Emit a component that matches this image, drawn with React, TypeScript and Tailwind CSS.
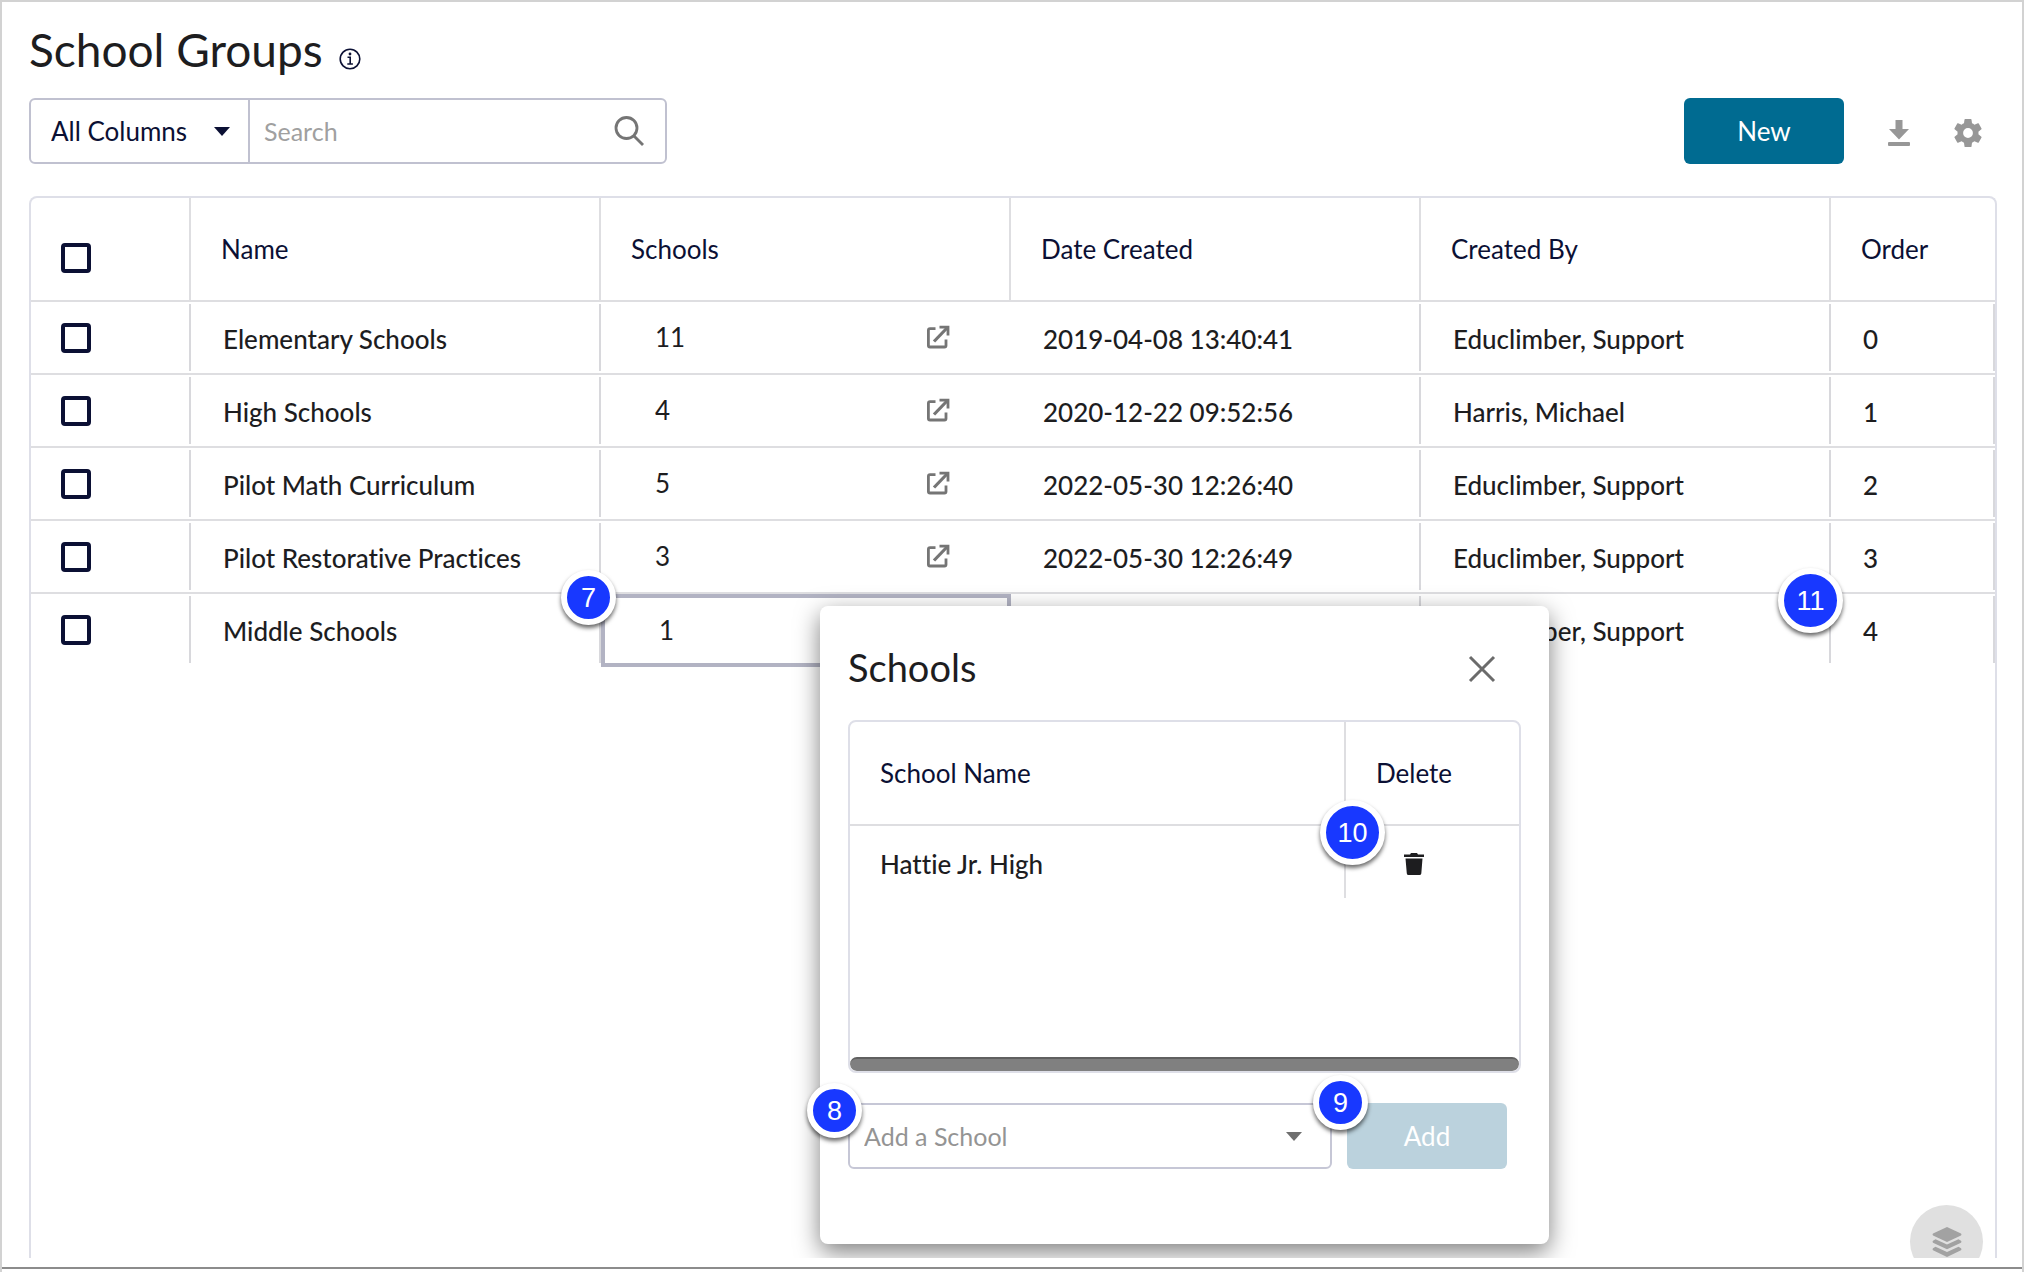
import clsx from "clsx";
import { ReactNode } from "react";

type SchoolGroup = {
  name: string;
  schools: number;
  date_created: string;
  created_by: string;
  order: number;
};

const groups: SchoolGroup[] = [
  { name: "Elementary Schools", schools: 11, date_created: "2019-04-08 13:40:41", created_by: "Educlimber, Support", order: 0 },
  { name: "High Schools", schools: 4, date_created: "2020-12-22 09:52:56", created_by: "Harris, Michael", order: 1 },
  { name: "Pilot Math Curriculum", schools: 5, date_created: "2022-05-30 12:26:40", created_by: "Educlimber, Support", order: 2 },
  { name: "Pilot Restorative Practices", schools: 3, date_created: "2022-05-30 12:26:49", created_by: "Educlimber, Support", order: 3 },
  { name: "Middle Schools", schools: 1, date_created: "2022-05-30 12:27:03", created_by: "Educlimber, Support", order: 4 },
];

const Caret = ({ className }: { className?: string }) => (
  <svg viewBox="0 0 16 9" className={clsx("pointer-events-none absolute h-[9px] w-4", className)} fill="currentColor">
    <path d="M0 0h16L8 9z" />
  </svg>
);

const OpenIcon = () => (
  <svg viewBox="0 0 24 24" className="size-6" fill="none" stroke="currentColor" strokeWidth="2.8">
    <path d="M9.500 3.600H4Q2.400 3.600 2.400 5.200V20.500Q2.400 22 4 22H18.500Q20 22 20 20.500V14.500" />
    <path d="M8 16.500L21 3" strokeWidth="3.2" />
    <path d="M13.500 2.200H22V10.500" />
  </svg>
);

const Tick = ({ label }: { label: string }) => (
  <input
    type="checkbox"
    aria-label={label}
    className="block size-[30px] appearance-none rounded-sm border-4 border-[#0b1034] bg-white"
  />
);

const HeadCell = ({ children, last }: { children: ReactNode; last?: boolean }) => (
  <th
    className={clsx(
      "h-[104px] border-b-2 border-[#dedee1] px-[30px] pb-px text-left font-normal text-[#0b1034]",
      !last && "border-r-2"
    )}
  >
    {children}
  </th>
);

const Cell = ({ children, last_row }: { children: ReactNode; last_row: boolean }) => (
  <td className={clsx("h-[73px] border-b-2 p-0", last_row ? "border-transparent" : "border-[#dedee1]")}>
    <div className="flex h-[67px] items-center border-r-2 border-[#d8d8dc] px-8 pt-[3px]">{children}</div>
  </td>
);

const Badge = ({ children, className, large }: { children: ReactNode; className: string; large?: boolean }) => (
  <span
    className={clsx(
      "absolute z-20 flex items-center justify-center rounded-full border-[6px] border-white bg-[#1838ff] pt-px font-['Liberation_Sans',sans-serif] text-[27px] leading-none text-white shadow-[0_3px_4px_rgba(0,0,0,0.6)]",
      large ? "size-[65px]" : "size-[55px]",
      className
    )}
  >
    {children}
  </span>
);

const SchoolsDialog = () => (
  <section
    role="dialog"
    aria-label="Schools"
    className="absolute top-[604px] left-[818px] z-10 flex h-[638px] w-[729px] flex-col rounded-lg bg-white px-7 shadow-[0_8px_24px_rgba(0,0,0,0.5)]"
  >
    <header className="flex h-[114px] items-center justify-between pt-3 pr-[25px]">
      <h2 className="pb-1 text-[38px] leading-none text-[#1d1d1f]">Schools</h2>
      <button type="button" aria-label="Close" className="text-[#6b6b6b]">
        <svg viewBox="0 0 28 28" className="size-7" fill="none" stroke="currentColor" strokeWidth="3">
          <path d="M2 2L26 26M26 2L2 26" />
        </svg>
      </button>
    </header>
    <div className="flex h-[353px] flex-col justify-between overflow-hidden rounded-lg border-2 border-[#dedfe8]">
      <table className="w-full table-fixed border-separate border-spacing-0">
        <colgroup>
          <col />
          <col className="w-[173px]" />
        </colgroup>
        <thead>
          <tr>
            <HeadCell>School Name</HeadCell>
            <HeadCell last>Delete</HeadCell>
          </tr>
        </thead>
        <tbody>
          <tr className="font-medium text-[#1d1d1f]">
            <td className="h-[72px] border-r-2 border-[#dedee1] px-[30px] pt-[3px]">Hattie Jr. High</td>
            <td className="px-[58px] pt-[3px]">
              <button type="button" aria-label="Delete Hattie Jr. High" className="block">
                <svg viewBox="0 0 20 22" className="h-[22px] w-5" fill="currentColor">
                  <path d="M0 1.500h6L7 0h6l1 1.500h6V4H0zM1.500 5.500h17l-1.200 15Q17 22 15.500 22h-11Q3 22 2.800 20.500z" />
                </svg>
              </button>
            </td>
          </tr>
        </tbody>
      </table>
      <div className="h-[14px] rounded-full border-t-2 border-[#606060] bg-[#808080]" />
    </div>
    <div className="mt-[30px] flex gap-[15px] pr-[14px]">
      <div className="relative flex-1 text-[#6f6f6f]">
        <select
          aria-label="Add a School"
          className="block h-[66px] w-full appearance-none rounded-md border-2 border-[#c6c7d6] bg-white px-[14px] text-[25px] text-[#949494]"
        >
          <option>Add a School</option>
        </select>
        <Caret className="top-[29px] right-[30px]" />
      </div>
      <button type="button" disabled className="h-[66px] w-40 rounded-md bg-[#bbd2dd] text-white">
        Add
      </button>
    </div>
  </section>
);

export default function App() {
  return (
    <div className="flex h-screen flex-col border-2 border-b-0 border-[#d2d2d2] bg-white font-[Lato,sans-serif] text-[26px] leading-8 [font-variant-ligatures:none]">
      <main className="relative flex flex-1 flex-col overflow-hidden pr-[25px] pl-[27px]">
        <header className="flex h-24 items-center gap-4">
          <h1 className="text-[46px] leading-none text-[#1d1d1f]">School Groups</h1>
          <button type="button" aria-label="About school groups" className="mt-[18px] text-[#0b1034]">
            <svg viewBox="0 0 22 22" className="size-[22px]" fill="none" stroke="currentColor" strokeWidth="1.600">
              <circle cx="11" cy="11" r="9.800" />
              <path d="M8.500 9.300h2.700v6.500M8.300 16h5.600" />
              <circle cx="11" cy="6" r="1.400" fill="currentColor" stroke="none" />
            </svg>
          </button>
        </header>

        <div className="flex items-center justify-between">
          <div className="flex h-[66px] w-[638px] rounded-md border-2 border-[#c0c1d0]">
            <div className="relative border-r-2 border-[#c0c1d0] text-[#0b1034]">
              <select aria-label="Search column" className="block h-full w-[217px] appearance-none pl-5">
                <option>All Columns</option>
              </select>
              <Caret className="top-[27px] right-[18px]" />
            </div>
            <input
              type="search"
              aria-label="Search"
              placeholder="Search"
              className="min-w-0 flex-1 px-[14px] text-[25px] outline-none placeholder:text-[#a0a0a0]"
            />
            <button type="button" aria-label="Run search" className="px-[21px] text-[#757575]">
              <svg viewBox="0 0 30 30" className="size-[30px]" fill="none" stroke="currentColor" strokeWidth="2.800">
                <circle cx="12.500" cy="12" r="10.500" />
                <path d="M20 20L29 29" />
              </svg>
            </button>
          </div>
          <div className="flex items-center pr-[15px] text-[#979797]">
            <button type="button" className="mr-11 h-[66px] w-40 rounded-md bg-[#006b91] text-white">
              New
            </button>
            <button type="button" aria-label="Download" className="mr-11 pt-1">
              <svg viewBox="0 0 22 26" className="h-[26px] w-[22px]" fill="currentColor">
                <path d="M7.500 0h7v9H21L11 19.500 1 9h6.500z" />
                <rect y="22" width="22" height="4" rx="1" />
              </svg>
            </button>
            <button type="button" aria-label="Settings" className="pt-1">
              <svg viewBox="2 2 20 20" className="size-7" fill="currentColor">
                <path d="M19.430 12.980c.04-.32.07-.64.07-.98s-.03-.66-.07-.98l2.110-1.650c.19-.15.24-.42.12-.64l-2-3.460c-.12-.22-.39-.3-.61-.22l-2.490 1c-.52-.4-1.080-.73-1.690-.98l-.38-2.650C14.460 2.180 14.250 2 14 2h-4c-.25 0-.46.18-.49.42l-.38 2.650c-.61.25-1.170.59-1.690.98l-2.490-1c-.23-.09-.49 0-.61.22l-2 3.460c-.13.22-.07.49.12.64l2.110 1.650c-.04.32-.07.65-.07.98s.03.66.07.98l-2.110 1.650c-.19.15-.24.42-.12.64l2 3.460c.12.22.39.3.61.22l2.490-1c.52.4 1.080.73 1.690.98l.38 2.650c.03.24.24.42.49.42h4c.25 0 .46-.18.49-.42l.38-2.650c.61-.25 1.170-.59 1.690-.98l2.490 1c.23.09.49 0 .61-.22l2-3.460c.12-.22.07-.49-.12-.64zM12 15.500A3.500 3.500 0 1 1 12 8.500a3.500 3.500 0 0 1 0 7z" />
              </svg>
            </button>
          </div>
        </div>

        <div className="mt-8 flex-1 overflow-hidden rounded-t-lg border-2 border-b-0 border-[#dedfe8]">
          <table className="w-full table-fixed border-separate border-spacing-0">
            <colgroup>
              <col className="w-40" />
              <col className="w-[410px]" />
              <col className="w-[410px]" />
              <col className="w-[410px]" />
              <col className="w-[410px]" />
              <col />
            </colgroup>
            <thead>
              <tr>
                <th className="border-r-2 border-b-2 border-[#dedee1] px-[30px] pt-[18px]">
                  <Tick label="Select all groups" />
                </th>
                <HeadCell>Name</HeadCell>
                <HeadCell>Schools</HeadCell>
                <HeadCell>Date Created</HeadCell>
                <HeadCell>Created By</HeadCell>
                <HeadCell last>Order</HeadCell>
              </tr>
            </thead>
            <tbody className="font-medium text-[#1d1d1f]">
              {groups.map((group, group_index) => {
                const last_row = group_index === groups.length - 1;
                return (
                  <tr key={group.name}>
                    <td className={clsx("h-[73px] border-b-2 p-0", last_row ? "border-transparent" : "border-[#dedee1]")}>
                      <div className="flex h-[67px] items-center border-r-2 border-[#d8d8dc] px-[30px]">
                        <Tick label={`Select ${group.name}`} />
                      </div>
                    </td>
                    <Cell last_row={last_row}>{group.name}</Cell>
                    <td
                      className={clsx(
                        "h-[73px] p-0",
                        last_row ? "border-4 border-[#b2b3c3]" : "border-b-2 border-[#dedee1]"
                      )}
                    >
                      <div className="flex items-center justify-between pr-[61px] pb-px pl-[54px] font-normal">
                        {group.schools}
                        {!last_row && (
                          <button type="button" aria-label={`Open schools of ${group.name}`} className="text-[#757575]">
                            <OpenIcon />
                          </button>
                        )}
                      </div>
                    </td>
                    <Cell last_row={last_row}>{group.date_created}</Cell>
                    <Cell last_row={last_row}>{group.created_by}</Cell>
                    <Cell last_row={last_row}>{group.order}</Cell>
                  </tr>
                );
              })}
            </tbody>
          </table>
        </div>

        <button
          type="button"
          aria-label="Layers"
          className="absolute right-[39px] bottom-[-20px] flex size-[73px] items-center justify-center rounded-full bg-[#e0e0e0] text-[#a2a2a2]"
        >
          <svg viewBox="0 0 30 30" className="size-[30px]" fill="currentColor">
            <path d="M15 0L29 6.500Q30 7.500 29 8.500L15 15 1 8.500Q0 7.500 1 6.500z" />
            <path d="M3.500 12.200L15 17.500 26.500 12.200 29 13.700Q30 14.700 29 15.700L15 22.300 1 15.700Q0 14.700 1 13.700z" />
            <path d="M3.500 19.800L15 25 26.500 19.800 29 21.300Q30 22.300 29 23.300L15 30 1 23.300Q0 22.300 1 21.300z" />
          </svg>
        </button>

        <SchoolsDialog />
        <Badge className="top-[568px] left-[559px]">7</Badge>
        <Badge className="top-[1081px] left-[805px]">8</Badge>
        <Badge className="top-[1073px] left-[1311px]">9</Badge>
        <Badge large className="top-[798px] left-[1318px]">10</Badge>
        <Badge large className="top-[566px] left-[1776px]">11</Badge>
      </main>
      <footer className="mb-[3px] h-[11px] border-b-2 border-[#8c8c8c]" />
    </div>
  );
}
